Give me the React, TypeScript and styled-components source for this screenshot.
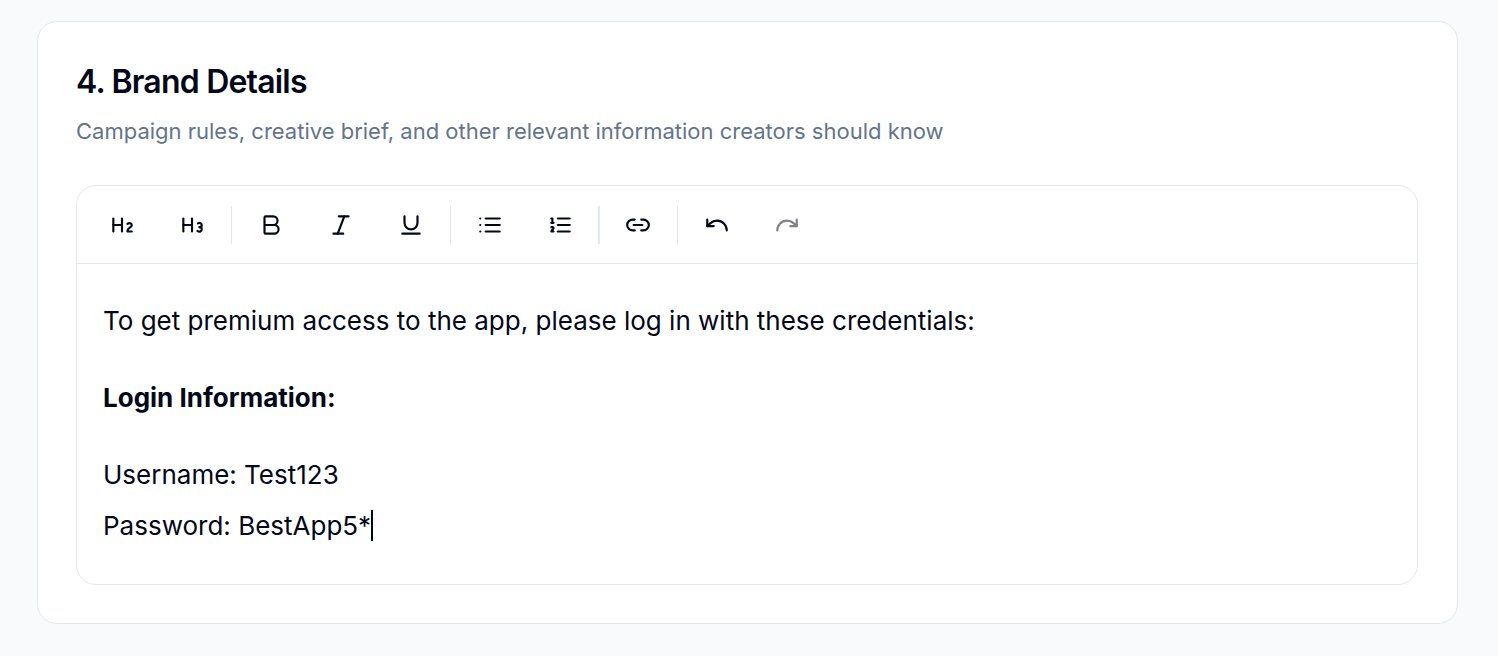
import React from "react";
import styled, { createGlobalStyle } from "styled-components";
import { Bold, Italic, Underline, Heading2, Heading3, Link2, Undo, Redo } from "lucide-react";

const GlobalStyle = createGlobalStyle`
  *, *::before, *::after { box-sizing: border-box; }
  body {
    margin: 0;
    background: #f8fafc;
    color: #020817;
    font-family: Inter, "Liberation Sans", sans-serif;
    -webkit-font-smoothing: antialiased;
  }
`;

const Page = styled.main`
  padding: 21px 40px 32px 37px;
`;

const Card = styled.section`
  padding: 38px 39px 38px 38px;
  background: #ffffff;
  border: 1px solid #e2e8f0;
  border-radius: 20px;
`;

const Title = styled.h2`
  margin: 0;
  font-size: 32px;
  font-weight: 600;
  line-height: 44px;
  letter-spacing: -0.025em;
`;

const Description = styled.p`
  margin: 10px 0 37px;
  font-size: 22px;
  line-height: 34px;
  color: #64748b;
`;

const Editor = styled.div`
  border: 1px solid #e2e8f0;
  border-radius: 20px;
  overflow: hidden;
`;

const Toolbar = styled.div`
  display: flex;
  align-items: center;
  flex-wrap: wrap;
  gap: 6px;
  padding: 14px 13px 13px;
  border-bottom: 1px solid #e2e8f0;
`;

const ToolButton = styled.button`
  display: flex;
  align-items: center;
  justify-content: center;
  width: 64px;
  height: 50px;
  padding: 0;
  border: 0;
  border-radius: 12px;
  background: transparent;
  color: inherit;
  cursor: pointer;

  &:hover:enabled { background: #f1f5f9; }
  &:disabled { opacity: 0.5; cursor: default; }
`;

const Separator = styled.span<{ $thick?: boolean }>`
  width: ${(p) => (p.$thick ? 2 : 1)}px;
  height: 38px;
  margin: 0 ${(p) => (p.$thick ? 0 : 1)}px;
  background: #e2e8f0;
`;

const Content = styled.div`
  padding: 31px 26px 33px;
  font-size: 26px;
  line-height: 51px;
  outline: none;
`;

const Paragraph = styled.p`
  margin: 0;

  & + & { margin-top: 26px; }
`;

const Caret = styled.span`
  display: inline-block;
  width: 2px;
  height: 31px;
  vertical-align: -6px;
  background: #020817;
`;

const ListGlyph = styled.svg.attrs({
  width: 26,
  height: 26,
  viewBox: "0 0 24 24",
  fill: "none",
  stroke: "currentColor",
  strokeWidth: 2,
  strokeLinecap: "round",
  strokeLinejoin: "round",
  "aria-hidden": true,
})``;

const BulletList = () => (
  <ListGlyph>
    <path d="M8 6h13M8 12h13M8 18h13M3 6h.01M3 12h.01M3 18h.01" />
  </ListGlyph>
);

const NumberedList = () => (
  <ListGlyph>
    <path d="M10 6h11M10 12h11M10 18h11M4 6h1v4M4 10h2" />
    <path d="M6 18H4c0-1 2-2 2-3s-1-1.5-2-1" />
  </ListGlyph>
);

export default function App() {
  return (
    <>
      <GlobalStyle />
      <Page>
        <Card>
          <Title>4. Brand Details</Title>
          <Description>
            Campaign rules, creative brief, and other relevant information creators should know
          </Description>
          <Editor>
            <Toolbar role="toolbar" aria-label="Formatting">
              <ToolButton type="button" aria-label="Heading 2"><Heading2 size={26} /></ToolButton>
              <ToolButton type="button" aria-label="Heading 3"><Heading3 size={26} /></ToolButton>
              <Separator />
              <ToolButton type="button" aria-label="Bold"><Bold size={26} /></ToolButton>
              <ToolButton type="button" aria-label="Italic"><Italic size={26} /></ToolButton>
              <ToolButton type="button" aria-label="Underline"><Underline size={26} /></ToolButton>
              <Separator />
              <ToolButton type="button" aria-label="Bullet list"><BulletList /></ToolButton>
              <ToolButton type="button" aria-label="Numbered list"><NumberedList /></ToolButton>
              <Separator $thick />
              <ToolButton type="button" aria-label="Link"><Link2 size={26} /></ToolButton>
              <Separator />
              <ToolButton type="button" aria-label="Undo"><Undo size={26} /></ToolButton>
              <ToolButton type="button" aria-label="Redo" disabled><Redo size={26} /></ToolButton>
            </Toolbar>
            <Content
              role="textbox"
              aria-multiline="true"
              aria-label="Brand details"
              contentEditable
              suppressContentEditableWarning
              spellCheck={false}
            >
              <Paragraph>To get premium access to the app, please log in with these credentials:</Paragraph>
              <Paragraph><strong>Login Information:</strong></Paragraph>
              <Paragraph>
                Username: Test123
                <br />
                Password: BestApp5*<Caret />
              </Paragraph>
            </Content>
          </Editor>
        </Card>
      </Page>
    </>
  );
}
